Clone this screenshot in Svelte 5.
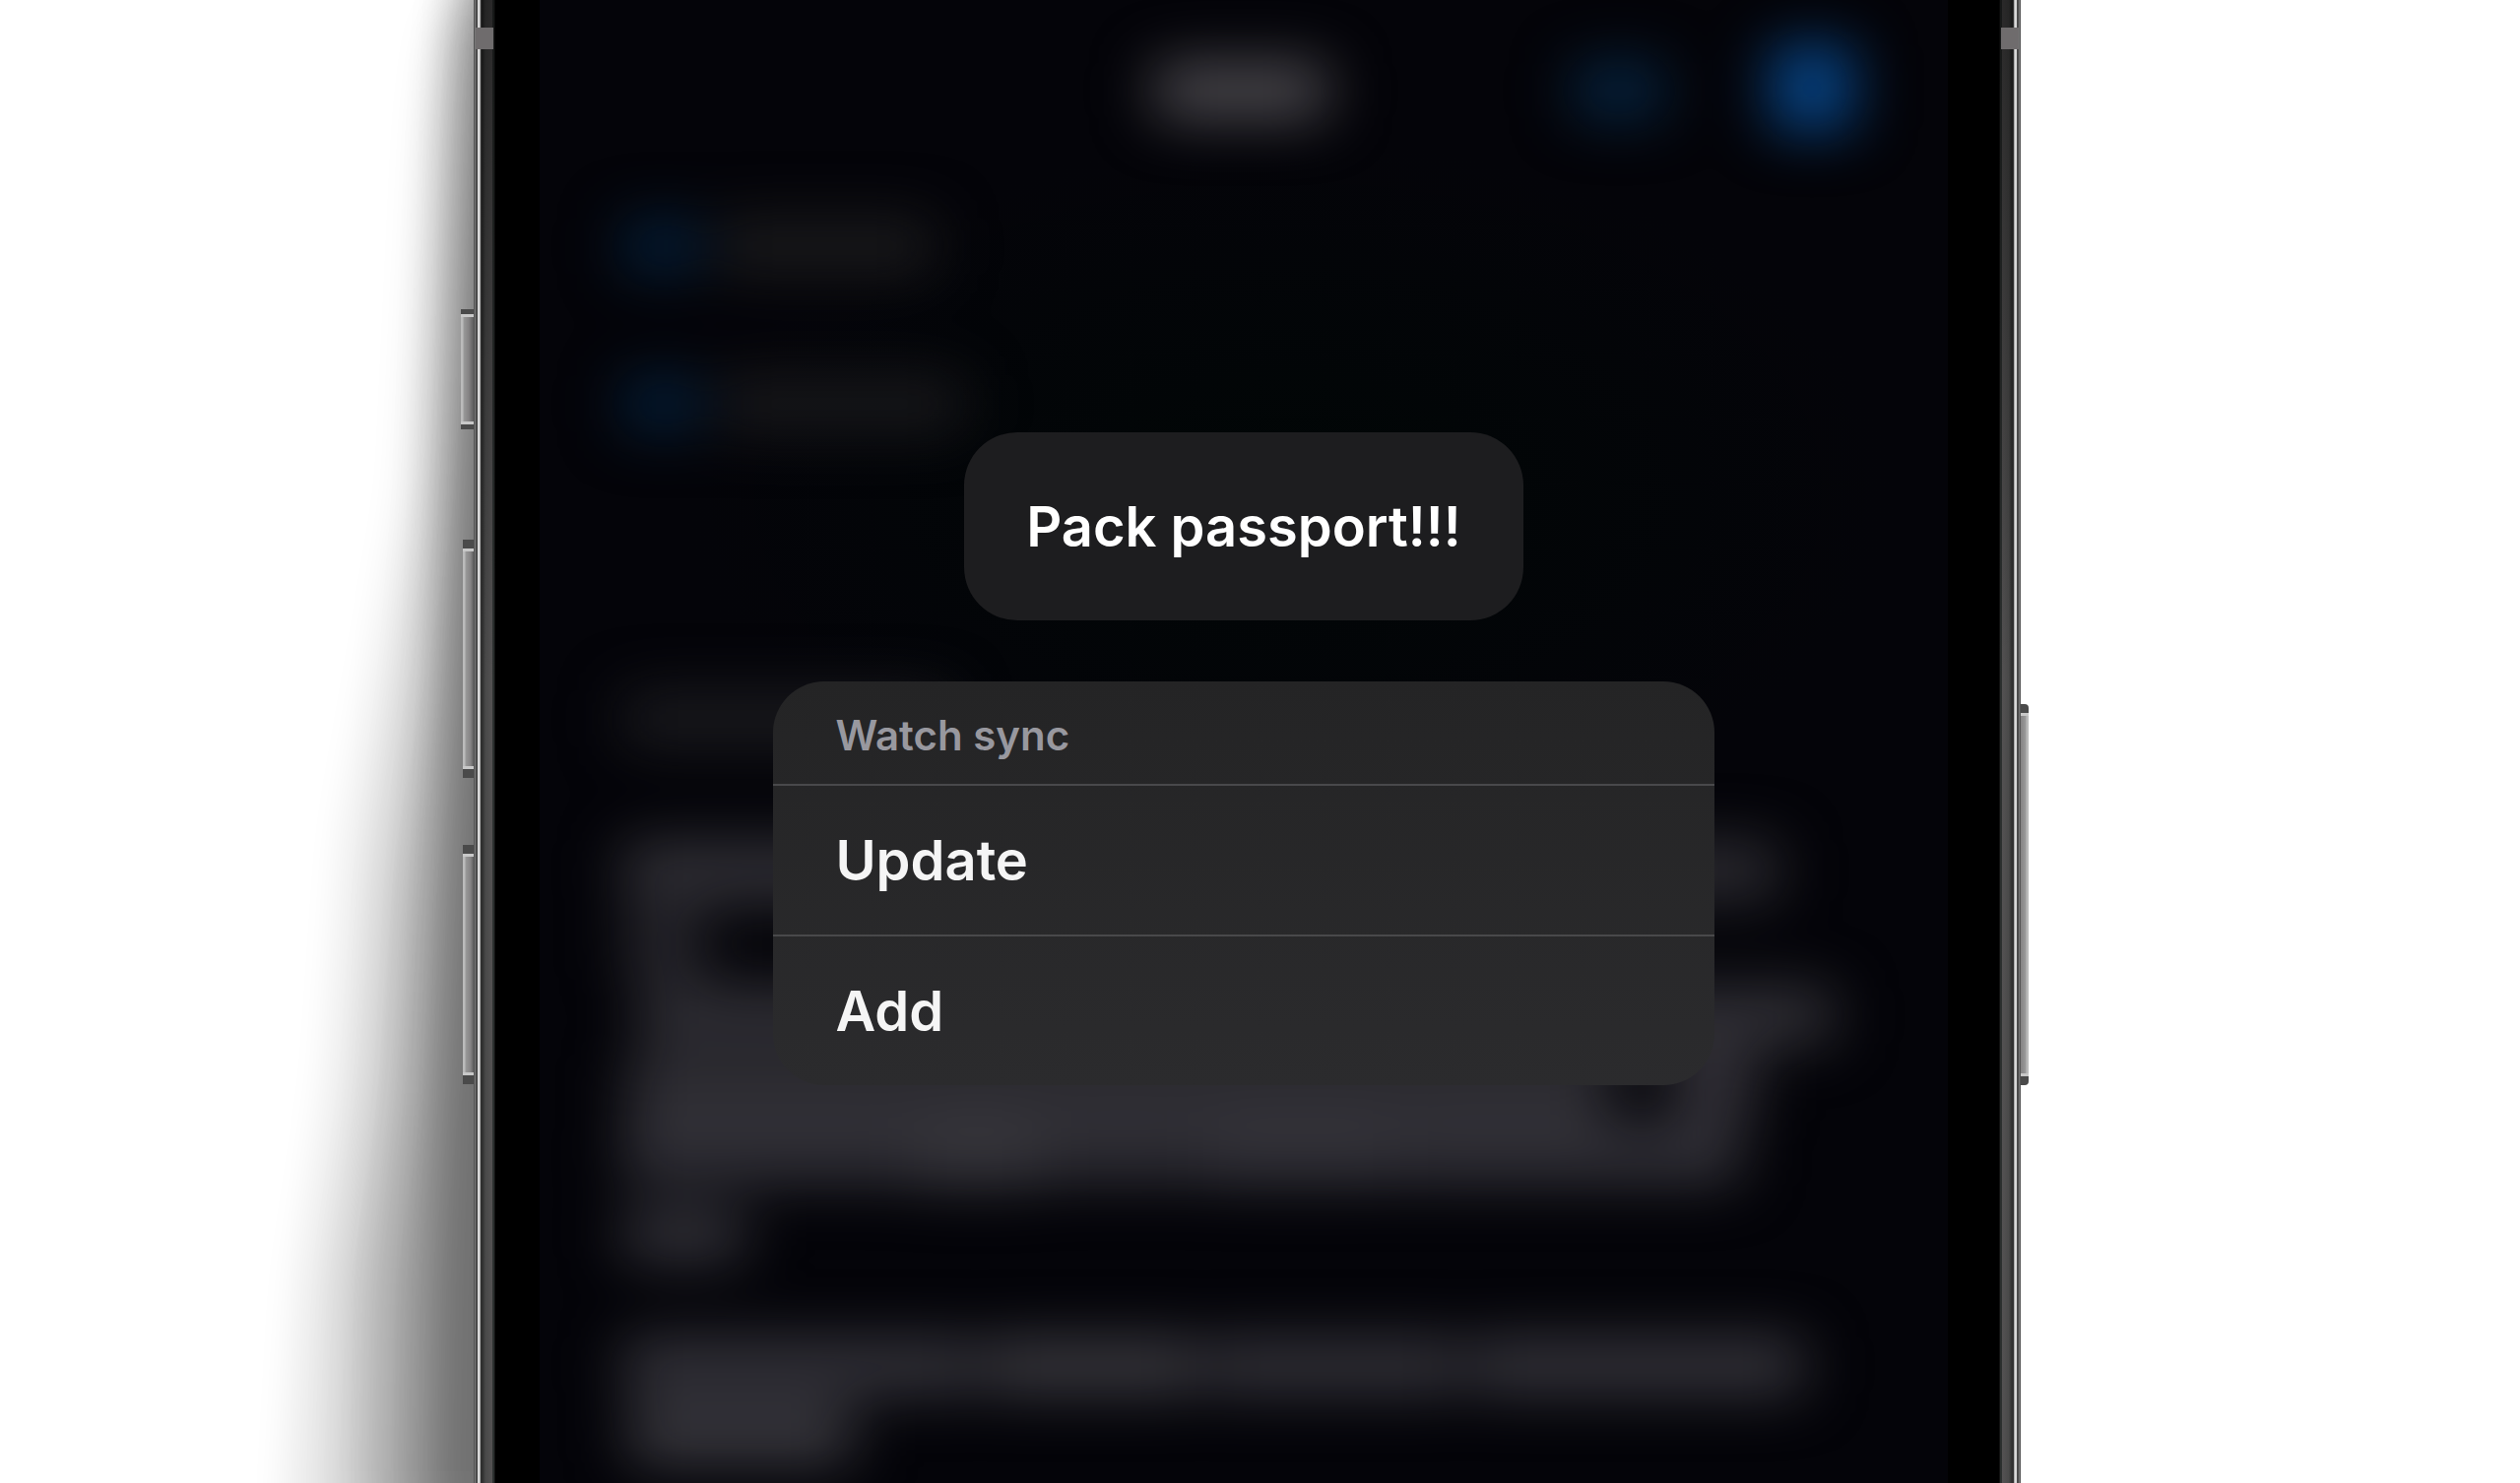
<script>
  const actions = ['Update', 'Add'];

  // Soft shapes of the note that lies behind the menu: [x, y, width, height, fill]
  const shapes = [
    [624, 62, 176, 60, '#48464b'],
    [1050, 62, 92, 60, '#06233f'],
    [1250, 44, 84, 90, '#074383'],
    [84, 220, 78, 60, '#041d36'],
    [180, 220, 220, 60, '#19191b'],
    [84, 380, 78, 60, '#041d36'],
    [180, 380, 250, 60, '#17171a'],
    [84, 700, 330, 60, '#19191d'],
    [84, 852, 500, 66, '#2f2e34'],
    [1000, 852, 258, 64, '#2a292f'],
    [86, 925, 80, 70, '#26252b'],
    [100, 1000, 1214, 62, '#2f2e34'],
    [88, 1070, 1000, 70, '#2f2e34'],
    [1150, 1060, 84, 80, '#312f36'],
    [84, 1140, 290, 62, '#302f36'],
    [374, 1140, 140, 66, '#36353b'],
    [514, 1140, 160, 62, '#2e2d34'],
    [674, 1140, 200, 64, '#333239'],
    [874, 1140, 346, 64, '#302f36'],
    [84, 1226, 124, 56, '#323138'],
    [84, 1356, 360, 62, '#313037'],
    [450, 1356, 220, 62, '#36353b'],
    [676, 1356, 260, 62, '#302f36'],
    [944, 1356, 340, 62, '#323138'],
    [90, 1426, 228, 62, '#38373d']
  ];

  // Stacked edges of the shadow beside the phone, from its faint rim to its core: [path, opacity]
  const edges = [
    ['M442 20 L430 120 L412 500 L385 660 L352 850 L335 1100 L305 1300 L290 1566 H560 V20Z', 0.09],
    ['M456-20 L448 120 L434 500 L420 680 L393 900 L380 1100 L352 1300 L346 1566 H560 V-20Z', 0.16],
    ['M470-60 L464 120 L452 500 L444 700 L428 900 L418 1100 L398 1300 L392 1566 H560 V-60Z', 0.2],
    ['M500-60 L486 120 L470 500 L460 750 L452 1000 L442 1300 L438 1566 H560 V-60Z', 0.26]
  ];
</script>

<main class="stage">
  <svg class="cast" viewBox="0 0 480 1506" preserveAspectRatio="none" aria-hidden="true">
    <defs>
      <filter id="shade" x="-60%" y="-10%" width="220%" height="120%" color-interpolation-filters="sRGB">
        <feGaussianBlur stdDeviation="20 30" />
      </filter>
    </defs>
    {#each edges as [d, opacity]}
      <path {d} fill="#000" {opacity} filter="url(#shade)" />
    {/each}
  </svg>

  <div class="phone">
    <span class="key mute"></span>
    <span class="key up"></span>
    <span class="key down"></span>
    <span class="key power"></span>
    <div class="rail left"></div>

    <section class="screen">
      <svg class="note" viewBox="0 0 1430 1506" preserveAspectRatio="none" aria-hidden="true">
        <defs>
          <filter id="soft" x="-20%" y="-20%" width="140%" height="140%" color-interpolation-filters="sRGB">
            <feGaussianBlur stdDeviation="30 28" />
          </filter>
          <radialGradient id="tint"><stop offset="0" stop-color="#010606" /><stop offset="1" stop-color="#010606" stop-opacity="0" /></radialGradient>
        </defs>
        <ellipse cx="760" cy="500" rx="620" ry="360" fill="url(#tint)" />
        <g filter="url(#soft)">
          {#each shapes as [x, y, w, h, fill]}
            <rect {x} {y} width={w} height={h} rx="12" {fill} />
          {/each}
        </g>
      </svg>

      <div class="overlay">
        <h1 class="preview">Pack passport!!!</h1>
        <div class="menu" role="menu" aria-labelledby="menu-title">
          <h2 id="menu-title">Watch sync</h2>
          {#each actions as action}
            <button type="button" role="menuitem">{action}</button>
          {/each}
        </div>
      </div>
    </section>

    <div class="rail right"></div>
  </div>
</main>

<style>
  :global(body) {
    margin: 0;
    background: #fff;
  }
  .stage {
    display: grid;
    grid-template-columns: 481fr 1571fr 507fr;
    min-height: 100vh;
    overflow: hidden;
    font-family: Inter, 'Liberation Sans', sans-serif;
  }
  .cast {
    width: 100%;
    height: 100%;
    display: block;
    contain: size;
  }
  .phone {
    position: relative;
    display: flex;
    background: #000;
  }
  .rail {
    flex: none;
    width: 22px;
    background:
      linear-gradient(#6f6c6d, #6f6c6d) 2px 28px / 18px 22px no-repeat,
      linear-gradient(rgba(0, 0, 0, 0.5), rgba(0, 0, 0, 0)) 8px 0 / 14px 700px no-repeat,
      linear-gradient(90deg, #555 0 1px, #777 1px 2px, #4a4a4a 2px 4px, #d8d8d8 4px 6px, #aaa 6px 7px, #303030 7px 9px, #494949 12px, #545253 19px, #2c302f 19px 21px, #111 21px);
  }
  .right {
    transform: scaleX(-1);
  }
  .screen {
    flex: 1;
    position: relative;
    margin: 0 52px 0 45px;
    background: #040409;
    overflow: hidden;
  }
  .note {
    position: absolute;
    inset: 0;
    width: 100%;
    height: 100%;
  }
  .overlay {
    position: relative;
    display: flex;
    flex-direction: column;
    align-items: center;
    gap: 62px;
    padding-top: 439px;
  }
  .preview {
    margin: 0;
    padding: 61px 63px 59px;
    border-radius: 54px;
    background: #1d1d1f;
    color: #fff;
    font-size: 56px;
    line-height: 71px;
    font-weight: 600;
    white-space: nowrap;
  }
  .menu {
    width: 66.8%;
    border-radius: 52px;
    overflow: hidden;
    background: linear-gradient(#242425, #2b2b2d);
  }
  .menu h2 {
    margin: 0;
    padding: 31px 63px 25px;
    color: #98989f;
    font-size: 42px;
    line-height: 48px;
    font-weight: 600;
  }
  .menu button {
    display: block;
    width: 100%;
    padding: 41px 63px 39px;
    border: 0;
    border-top: 2px solid #49494b;
    background: none;
    color: #f5f5f5;
    font: inherit;
    font-size: 56px;
    line-height: 71px;
    font-weight: 600;
    text-align: left;
  }
  .key {
    position: absolute;
    right: 100%;
    box-sizing: border-box;
    width: 11px;
    border: solid #4a4a4a;
    border-width: 9px 0;
    background:
      linear-gradient(#c8c8c8, #c8c8c8) 0 0 / 100% 3px no-repeat,
      linear-gradient(#c8c8c8, #c8c8c8) 0 100% / 100% 3px no-repeat,
      linear-gradient(90deg, #bbb 2px, #999 3px, #858384 8px, #5c5c5c);
    background-origin: padding-box;
    background-clip: padding-box;
  }
  .mute {
    top: 314px;
    width: 13px;
    height: 122px;
    border-width: 5px 0;
  }
  .up {
    top: 548px;
    height: 242px;
  }
  .down {
    top: 858px;
    height: 243px;
  }
  .power {
    top: 715px;
    right: auto;
    left: 100%;
    width: 8px;
    height: 387px;
    transform: scaleX(-1);
    border-radius: 4px 0 0 4px;
  }
</style>
